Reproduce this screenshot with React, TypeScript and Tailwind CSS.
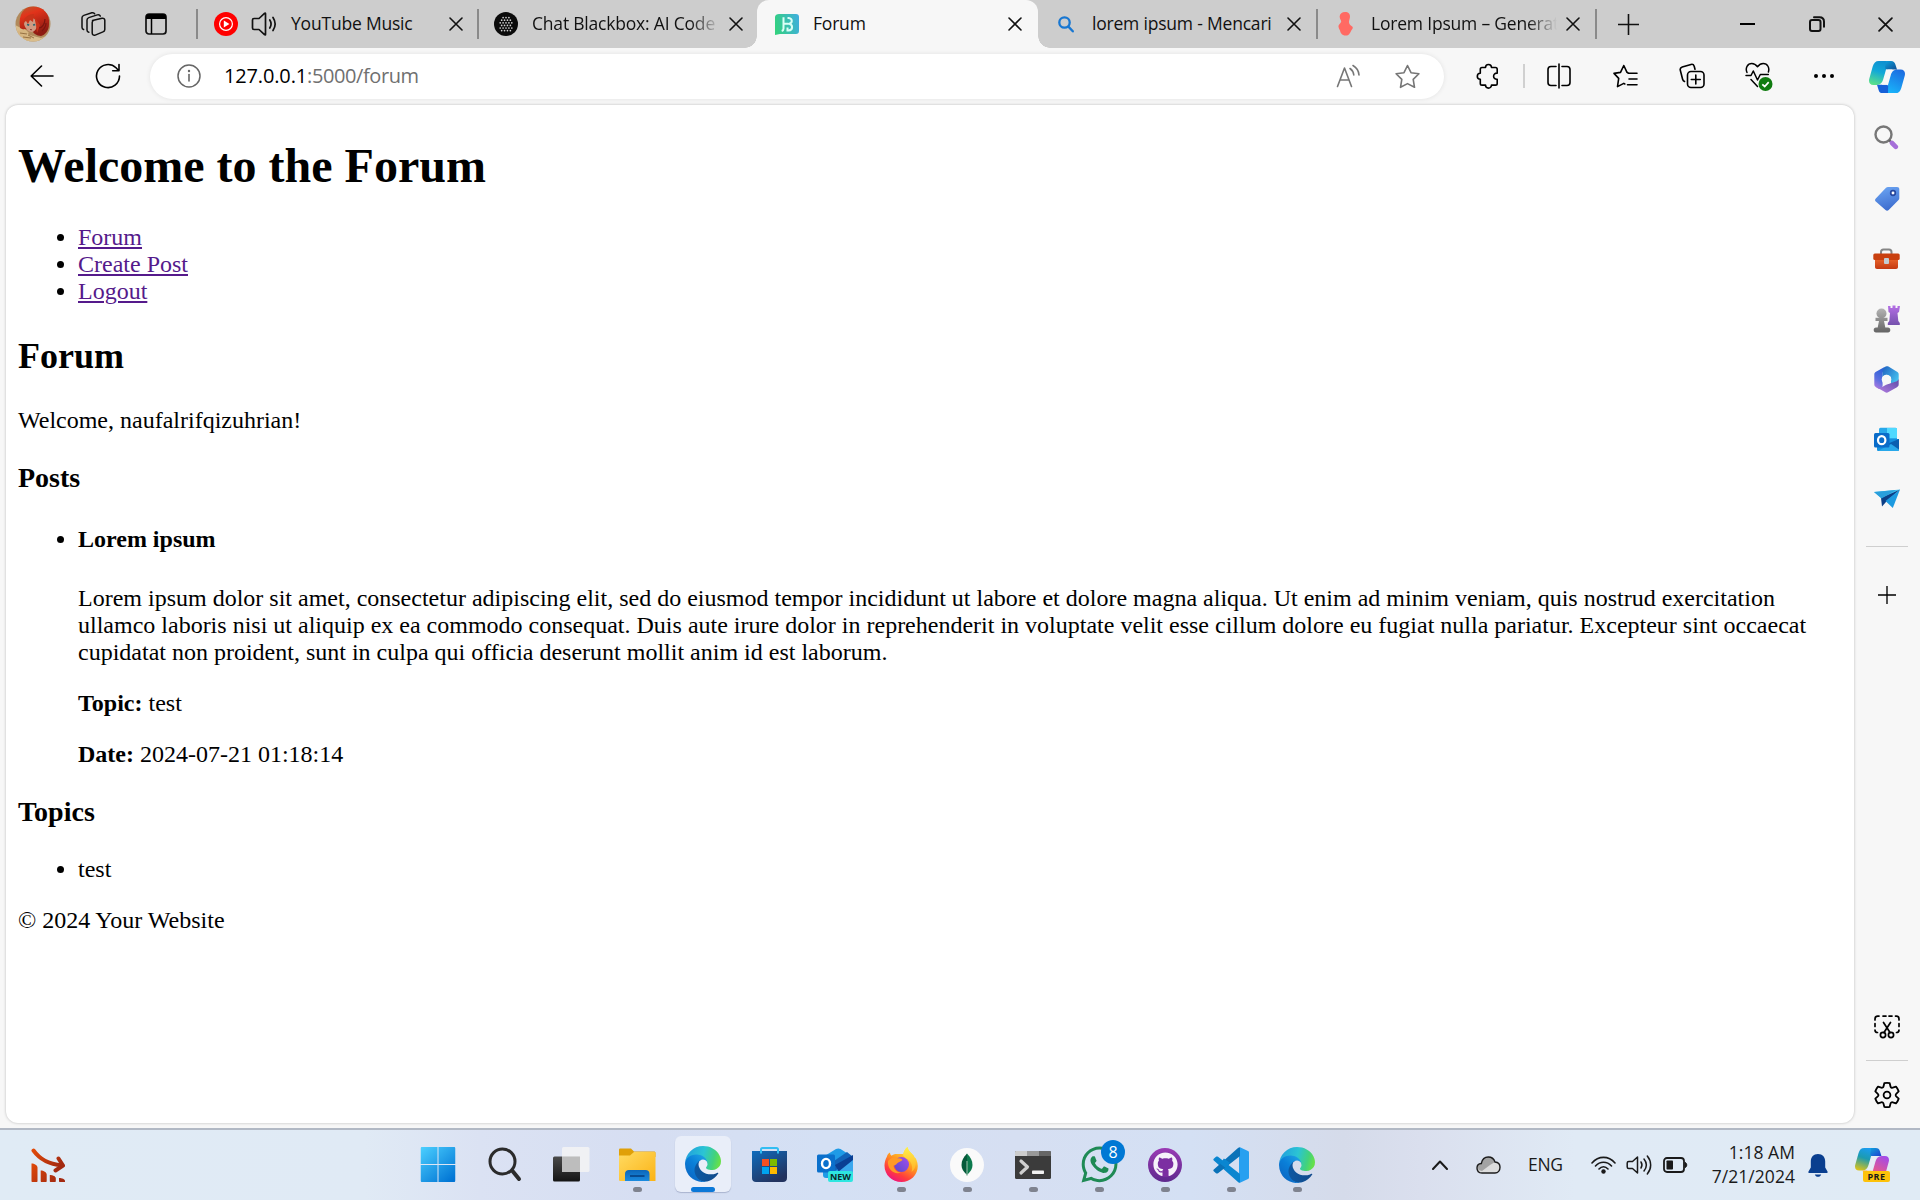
import React from "react";
import { FaGithub, FaWhatsapp } from "react-icons/fa";

type IconProps = { size?: number; className?: string };

const line = {
  fill: "none",
  stroke: "currentColor",
  strokeWidth: 1.6,
  strokeLinecap: "round" as const,
  strokeLinejoin: "round" as const,
};

/* ---------- generic glyphs ---------- */

function Cross({ size = 14 }: IconProps) {
  return (
    <svg width={size} height={size} viewBox="0 0 14 14" className="shrink-0">
      <path d="M1 1l12 12M13 1L1 13" {...line} />
    </svg>
  );
}

function Plus({ size = 20 }: IconProps) {
  return (
    <svg width={size} height={size} viewBox="0 0 20 20">
      <path d="M10 0v20M0 10h20" {...line} strokeLinecap="butt" strokeWidth={1.5} />
    </svg>
  );
}

function Avatar() {
  return (
    <svg width="36" height="36" viewBox="0 0 36 36">
      <defs>
        <clipPath id="av"><circle cx="18" cy="18" r="17.5" /></clipPath>
        <linearGradient id="avh" x1="0" y1="0" x2="0.4" y2="1">
          <stop offset="0" stopColor="#b5602f" />
          <stop offset=".35" stopColor="#e2331a" />
          <stop offset="1" stopColor="#8e1b12" />
        </linearGradient>
      </defs>
      <g clipPath="url(#av)">
        <rect width="36" height="36" fill="#b08a5c" />
        <path d="M0 19l8 4 6 6 12 3 8-3v7H0z" fill="#d9bd8c" />
        <path d="M5 22C3 8 9 0 19 0c10 0 16 8 15 18 0 7-4 11-8 12-4 0-9-3-10-8l-7 2z" fill="url(#avh)" />
        <path d="M10 14c3-3 7-3 11 0l1 5c0 4-3 7-5 7-4 0-7-4-8-8z" fill="#cf9a82" />
        <path d="M8 17c1-6 6-9 11-9l-1 8-3-2-2 4-2-3zM19 10l6 9-3 8-1-8z" fill="#c93319" />
        <path d="M12 18.500l2.200.6M18 19l2.200-.4" stroke="#2f6672" strokeWidth="1.700" />
        <path d="M15 23.500l2 .3" stroke="#8a3a30" strokeWidth="1" />
        <path d="M2 25l8-2 4 4-4 2 7 1-3 6H4z" fill="#d6b580" />
        <path d="M5 27l7 1M8 31l8 1M13 29l6 3" stroke="#8e6a3c" strokeWidth=".9" />
        <path d="M24 22c3 0 6-4 6-9M27 25c2-2 4-5 4-8" stroke="#7a160f" strokeWidth="1.200" fill="none" />
      </g>
    </svg>
  );
}

function Workspaces() {
  return (
    <svg width="26" height="26" viewBox="0 0 26 26" {...line} strokeWidth={1.5}>
      <path d="M12.500 9.500 22 7.300c1.600-.3 2.800.6 2.800 2v9.200c0 1.200-.6 2-1.800 2.400l-7.800 3.200c-1.600.6-3-.3-3-2V11.400c0-1 .6-1.700 1.600-2z" />
      <path d="M8.800 21.300c-1.200-.2-1.800-1-1.800-2.200V9c0-1.300.6-2 1.800-2.400l8.500-2.700c1.500-.4 2.500 0 3 1.200" />
      <path d="M3.600 18.500C2.500 18.200 2 17.300 2 16.200V6.800c0-1.300.6-2 1.800-2.400l8-2.600c1.400-.4 2.400 0 2.900 1" />
    </svg>
  );
}

function TabActions() {
  return (
    <svg width="22" height="22" viewBox="0 0 22 22">
      <rect x="1" y="1" width="20" height="20" rx="3" {...line} strokeWidth={1.7} />
      <path d="M1 4a3 3 0 0 1 3-3h14a3 3 0 0 1 3 3v2H1z" fill="#000" />
      <path d="M6.500 6v15" stroke="#000" strokeWidth="1.500" />
    </svg>
  );
}

function TabSpeaker() {
  return (
    <svg width="26" height="26" viewBox="0 0 26 26" {...line} strokeWidth={1.7}>
      <path d="M14.500 2.500v21c0 .6-.5.6-1 .2L8 18.500H3c-1 0-1.500-.6-1.500-1.500V9c0-.9.500-1.500 1.500-1.500h5l5.500-5.200c.5-.4 1-.4 1 .2z" />
      <path d="M18.800 9c1.600 2.500 1.600 5.500 0 8M22 6.500c2.800 4.200 2.800 8.800 0 13" />
    </svg>
  );
}

function MusicIcon() {
  return (
    <svg width="24" height="24" viewBox="0 0 24 24">
      <circle cx="12" cy="12" r="12" fill="#f00" />
      <circle cx="12" cy="12" r="6.400" fill="none" stroke="#fff" strokeWidth="1.200" />
      <path d="M9.800 8.400v7.200l5.600-3.600z" fill="#fff" />
    </svg>
  );
}

function BlackboxIcon() {
  const rows: [number, number][] = [[5.600, 3], [8.200, 4], [10.800, 5], [13.400, 4], [16, 5], [18.600, 4]];
  return (
    <svg width="24" height="24" viewBox="0 0 24 24">
      <circle cx="12" cy="12" r="12" fill="#0b0b0b" />
      {rows.map(([y, n]) =>
        Array.from({ length: n }, (_, i) => (
          <circle key={`${y}-${i}`} cx={12 + (i - (n - 1) / 2) * 2.900} cy={y} r=".85" fill="#d0d0d0" />
        ))
      )}
    </svg>
  );
}

function ForumIcon() {
  return (
    <svg width="24" height="21" viewBox="0 0 24 21">
      <defs>
        <linearGradient id="fo" x1="0" y1=".6" x2="1" y2=".4">
          <stop offset="0" stopColor="#33d17f" />
          <stop offset="1" stopColor="#3fb0da" />
        </linearGradient>
      </defs>
      <path d="M4 0h17c2 0 3 1 3 3v14c0 2-1 3-3 3H5l-5 1V3c0-2 2-3 4-3z" fill="url(#fo)" />
      <path d="M8.500 3.200v11.500c0 1.500-.8 2-1.800 2.300M9 9.800h4.200M12.500 4h1.200c4 .6 4 4.800.6 5.800 3.800 1 3.800 6.200-.6 6.800h-1.200v-3" fill="none" stroke="#d9fff6" strokeWidth="2" />
    </svg>
  );
}

function BingSearch() {
  return (
    <svg width="16" height="17" viewBox="0 0 16 17" fill="none" stroke="#1877d2" strokeWidth="2.300" strokeLinecap="round">
      <circle cx="6.500" cy="6.500" r="5.200" />
      <path d="M10.400 10.600l4.400 4.700" />
    </svg>
  );
}

function LoremIcon() {
  return (
    <svg width="15" height="24" viewBox="0 0 15 24">
      <path d="M7 0c3.500 0 5 2 5 4.500 0 2-.8 3-1 5s1 3.500 3.200 5c1 .9.600 2.200-.4 3.300-1.500 1.800-1.800 5.800-6 5.800S2.500 20.800 2 18.600C1.600 17 0 15.500 .6 13.600c.5-1.600 2.500-2.300 2.600-4C3.300 8 1.500 6.800 1.700 4.300 1.900 1.600 4 0 7 0z" fill="#ff6a63" />
    </svg>
  );
}

/* ---------- toolbar icons ---------- */

const BackIcon = () => (
  <svg width="24" height="22" viewBox="0 0 24 22"><path d="M11.500 1 1.200 11l10.300 10M1.500 11H23" {...line} /></svg>
);
const RefreshIcon = () => (
  <svg width="26" height="26" viewBox="0 0 26 26">
    <path d="M24.500 13A11.500 11.500 0 1 1 21 4.800l2.800 2.900M24 1.500v6.300h-6.300" {...line} />
  </svg>
);
const InfoIcon = () => (
  <svg width="24" height="24" viewBox="0 0 24 24" className="text-[#666]">
    <circle cx="12" cy="12" r="11" {...line} strokeWidth={1.5} />
    <path d="M12 10.500V17" {...line} />
    <circle cx="12" cy="7" r="1.200" fill="currentColor" />
  </svg>
);
const ReadAloud = () => (
  <svg width="25" height="24" viewBox="0 0 25 24" className="text-[#767676]">
    <path d="M1.500 22.500 8.500 4l7 18.500M4 16h9M14 4.500c2.500 1.700 3.500 3.700 3.800 6.500M17 1.500c4 2.300 5.700 5.500 6 9.500" {...line} />
  </svg>
);
const STAR = "M12.500 1.500 16 8.700l7.900 1.100-5.700 5.600 1.300 7.900-7-3.700-7 3.700 1.300-7.900L1.100 9.800 9 8.700z";
const StarIcon = () => (
  <svg width="25" height="25" viewBox="0 0 25 25" className="text-[#767676]"><path d={STAR} {...line} /></svg>
);
const PuzzleIcon = () => (
  <svg width="24" height="26" viewBox="0 0 24 26">
    <path d="M9.500 4.500a3 3 0 0 1 6 0h4c1 0 1.700.7 1.700 1.700v4c-4.800-.5-4.800 6.500 0 6v4.200c0 1-.7 1.700-1.700 1.700h-4a3 3 0 0 1-6 0H6c-1 0-1.700-.7-1.700-1.700v-4.200a3 3 0 0 1 0-6v-4c0-1 .7-1.700 1.700-1.700z" {...line} />
  </svg>
);
const SplitIcon = () => (
  <svg width="24" height="26" viewBox="0 0 24 26">
    <path d="M9 3.500H4C2 3.500 1 4.500 1 6.500v13c0 2 1 3 3 3h5M15 3.500h5c2 0 3 1 3 3v13c0 2-1 3-3 3h-5M12 1v24" {...line} />
  </svg>
);
const FavoritesIcon = () => (
  <svg width="25" height="25" viewBox="0 0 25 25">
    <path d="M15.500 9.200 14 8.300 10.800 1.500 7.500 8.400l-6.500 1 4.700 5-1.200 8.200 6.300-3.200 1 .6M15.500 9.200h8.500M16 15h8M14.500 20.800H24" {...line} />
  </svg>
);
const CollectionsIcon = () => (
  <svg width="26" height="26" viewBox="0 0 26 26">
    <path d="M5.500 18.500c-1-.4-1.600-1.100-1.900-2.200L1.300 7.200C.9 5.600 1.600 4.500 3.200 4L12 1.400c1.500-.4 2.700.3 3.200 1.800l.8 3" {...line} />
    <rect x="8.500" y="8.500" width="16.500" height="16" rx="3.500" {...line} />
    <path d="M16.800 12v9M12.300 16.500h9" {...line} />
  </svg>
);
const EssentialsIcon = () => (
  <svg width="28" height="30" viewBox="0 0 28 30">
    <path d="M2 10.500C0 6 2.500 1.500 6.800 1.500c3 0 4.500 1.600 5.700 3.200 1.300-1.600 2.800-3.200 5.700-3.200 4.500 0 6.500 4.500 5.200 8.500M1 13.500h5L8.300 9l4.200 9 2.800-5.500h8M6 17.500l6.500 7" {...line} strokeWidth={1.500} />
    <circle cx="20.500" cy="22" r="7" fill="#107c10" />
    <path d="M17.300 22.300l2.400 2.200 4-4.400" fill="none" stroke="#fff" strokeWidth="1.700" />
  </svg>
);

function CopilotIcon({ pre = false, w = 36 }: { pre?: boolean; w?: number }) {
  const a = pre ? "cpa" : "ca";
  const b = pre ? "cpb" : "cb";
  const c = pre ? "cpc" : "cc";
  return (
    <svg width={w} height={w * 0.9} viewBox="0 0 36 32.400">
      <defs>
        <linearGradient id={a} x1=".6" y1="0" x2=".3" y2="1">
          <stop offset="0" stopColor={pre ? "#1a9cf0" : "#0e8fd0"} />
          <stop offset=".45" stopColor={pre ? "#1c9bb0" : "#12a8d8"} />
          <stop offset="1" stopColor={pre ? "#d8c21c" : "#5ae08a"} />
        </linearGradient>
        <linearGradient id={b} x1=".8" y1="0" x2=".3" y2="1">
          <stop offset="0" stopColor={pre ? "#a24bea" : "#1c6be0"} />
          <stop offset="1" stopColor={pre ? "#ff5f6a" : "#19b6fb"} />
        </linearGradient>
        <linearGradient id={c} x1="0" y1="0" x2="1" y2="1">
          <stop offset="0" stopColor="#0fa0dc" />
          <stop offset="1" stopColor={pre ? "#1c3fd0" : "#0f4f96"} />
        </linearGradient>
      </defs>
      <path d="M9.800 0H22c-2 .3-3 1.800-3.700 4l-4 14c-1 3.600-3 5.900-6.500 5.900H4.300C1 23.900-.6 21.500.2 18L3.700 5.500C4.800 2 6.500 0 9.800 0z" fill={`url(#${a})`} />
      <path d="M26.200 32.400H14c2-.3 3-1.800 3.700-4l4-14c1-3.600 3-5.900 6.500-5.900h3.500c3.300 0 4.900 2.400 4.100 5.900l-3.500 12.500c-1.100 3.500-2.800 5.500-6.100 5.500z" fill={`url(#${b})`} />
      <path d="M17 0h5c2.500 0 3.700 1.200 4.400 3.500L28 8.500h-9.500c-2 0-2.500-1-2.300-3z" fill={`url(#${c})`} />
      <path d="M19 32.400h-5c-2.500 0-3.700-1.200-4.400-3.500L8 23.800h8.500c2.500 0 3 1 2.600 3z" fill={pre ? "#ffb03a" : "#1660d8"} />
      <path d="M18.500 8.600h5c-1.200 1.100-2 2.700-2.600 4.700l-3 10.500h-5.200c1.200-1.300 1.900-3.200 2.400-5z" fill={pre ? "#e6edf6" : "#f7f7f7"} />
    </svg>
  );
}

/* ---------- sidebar icons ---------- */

const SideSearch = () => (
  <svg width="25" height="25" viewBox="0 0 25 25">
    <circle cx="9.500" cy="9.500" r="8" fill="none" stroke="#777" strokeWidth="2.400" />
    <path d="M15 15l3 3" stroke="#666" strokeWidth="2.400" />
    <path d="M18 18l3.800 3.800" stroke="#a56fd8" strokeWidth="4.600" strokeLinecap="round" />
  </svg>
);
const TagIcon = () => (
  <svg width="26" height="26" viewBox="0 0 26 26">
    <defs><linearGradient id="tg" x1="0" y1="0" x2=".3" y2="1"><stop stopColor="#6ea8f5" /><stop offset="1" stopColor="#3f6fd0" /></linearGradient></defs>
    <path d="M14 1h9c1.500 0 2.300.8 2.300 2.300V12c0 1-.3 1.600-1 2.300l-9.600 9.800c-1 1-2.200 1-3.200 0L1.800 15.600c-1-1-1-2.200 0-3.200L12 1.800c.6-.6 1.200-.8 2-.8z" fill="url(#tg)" />
    <circle cx="19" cy="7" r="2.300" fill="#fff" stroke="#2547a0" strokeWidth="1.700" />
  </svg>
);
const ToolboxIcon = () => (
  <svg width="27" height="22" viewBox="0 0 27 22">
    <defs><linearGradient id="tb" x1="0" y1="0" x2="0" y2="1"><stop stopColor="#e8632a" /><stop offset="1" stopColor="#c43a12" /></linearGradient></defs>
    <path d="M8 6V4c0-1.700.8-2.500 2.500-2.500h5.500c1.700 0 2.500.8 2.500 2.500v2" fill="none" stroke="#858585" strokeWidth="2" />
    <path d="M2 11h23v8c0 1.300-.8 2-2 2H4c-1.200 0-2-.7-2-2z" fill="url(#tb)" />
    <rect x=".3" y="5.500" width="26.400" height="6.500" rx="1.500" fill="#c9400f" />
    <rect x="11" y="10" width="5" height="6" rx="1" fill="#c4ccd2" />
  </svg>
);
const ChessIcon = () => (
  <svg width="27" height="28" viewBox="0 0 27 28">
    <defs>
      <linearGradient id="ch" x1="0" y1="0" x2="0" y2="1"><stop stopColor="#b56fe6" /><stop offset="1" stopColor="#7552ad" /></linearGradient>
      <linearGradient id="cp" gradientUnits="userSpaceOnUse" x1="0" y1="3" x2="0" y2="28"><stop stopColor="#b5b5b5" /><stop offset="1" stopColor="#636363" /></linearGradient>
    </defs>
    <path d="M15 1h2.500v2h2V.5h3v2.500h2V1H27l-1 6-1.500 1 .8 8 1.500 2v2h-12v-2l1.500-2 .7-8-1.500-1z" fill="url(#ch)" />
    <circle cx="8.500" cy="8.500" r="5" fill="url(#cp)" />
    <path d="M2.500 12.800h12v3.200H11l1.300 6.500H15c1.500 0 2.300 1 2.300 2.500s-.8 2.500-2.300 2.500H3c-1.500 0-2.300-1-2.300-2.500S1.500 22.500 3 22.500h1.700L6 16H2.500z" fill="url(#cp)" />
  </svg>
);
const OfficeIcon = () => (
  <svg width="25" height="27" viewBox="0 0 25 27">
    <defs>
      <linearGradient id="of" x1=".3" y1="0" x2="0" y2="1"><stop stopColor="#2f62d8" /><stop offset=".5" stopColor="#5b6fe0" /><stop offset="1" stopColor="#b97be0" /></linearGradient>
      <linearGradient id="og" x1="0" y1="0" x2="1" y2=".8"><stop stopColor="#1f5fc0" /><stop offset="1" stopColor="#48c8f2" /></linearGradient>
      <linearGradient id="oh" x1="0" y1="1" x2="1" y2="0"><stop stopColor="#b77fe4" /><stop offset="1" stopColor="#5b4aa6" /></linearGradient>
    </defs>
    <path d="M10.500 1 2 5.800C.8 6.500.3 7.300.3 8.500v9.800c0 1.300.5 2.200 1.700 2.900l3 1.700c2.500 0 3.600-1.200 3.600-3.600V7z" fill="url(#of)" />
    <path d="M12.500.2C9.500.9 8.500 3.500 8.500 6.500V11l4-2.300L17 11v8l6-3.500c1-.6 1.700-1.500 1.700-3V8.500c0-1.200-.5-2-1.700-2.700L14.500.6c-.7-.4-1.300-.5-2-.4z" fill="url(#og)" />
    <path d="M24.700 12.500v5.800c0 1.300-.5 2.200-1.700 2.900l-8.500 4.900c-1.200.7-2.400.7-3.600 0L2 21c2.200 1 4.600.9 6.600-.3l4-2.300 9.500-3c1.500-.6 2.400-1.500 2.600-2.900z" fill="url(#oh)" />
    <circle cx="12.500" cy="13.500" r="4.800" fill="#f7f7f7" />
  </svg>
);
const OutlookIcon = () => (
  <svg width="25" height="25" viewBox="0 0 25 25">
    <rect x="5" y=".8" width="18" height="15" rx="1.500" fill="#28a8ea" />
    <path d="M13 1h10v10H13z" fill="#50d9ff" />
    <path d="M3 12h22v10.500c0 1-.7 1.500-1.500 1.500h-19C3.500 24 3 23.500 3 22.500z" fill="#1490df" />
    <path d="M25 12v11L13 17z" fill="#0a5fb0" />
    <path d="M4 24 17 17l8 5.500c0 1-.7 1.500-1.500 1.500z" fill="#28a8ea" />
    <rect x="0" y="6" width="15.500" height="14.500" rx="1.500" fill="#0a6cc9" />
    <ellipse cx="7.700" cy="13.200" rx="3.700" ry="4" fill="none" stroke="#fff" strokeWidth="2.200" />
  </svg>
);
const DropIcon = () => (
  <svg width="26" height="20" viewBox="0 0 26 20">
    <path d="M0 3 26 .5 8 9.500z" fill="#41c3f0" />
    <path d="M26 .5 7 9l1 8.500L12 13z" fill="#0d3f86" />
    <path d="M26 .5 11.500 12l7.300 7z" fill="#1d9ae0" />
    <path d="M0 3l7.500 6.500L22 1z" fill="#2a9fdc" />
  </svg>
);
const SnipIcon = () => (
  <svg width="26" height="24" viewBox="0 0 26 24" {...line} strokeWidth={1.700}>
    <path d="M1 5V4c0-1.700 1-2.900 2.700-2.900H5M9 1.100h3M15 1.100h3M21.500 1.100h1C24 1.100 25 2.300 25 4v1M25 8.500v3M25 15c0 1.500-1 2.500-2.500 2.500M1 8.500v3M1 15c0 1.500 1 2.500 2.500 2.500" />
    <path d="M9.500 7.500l6.500 10M16.500 7.500 10 17.500" />
    <circle cx="9" cy="20" r="2.600" /><circle cx="17" cy="20" r="2.600" />
  </svg>
);
const GearIcon = () => (
  <svg width="28" height="28" viewBox="0 0 28 28" {...line} strokeWidth={1.800}>
    <path d="M11.300 2.200c1.800-.4 3.600-.4 5.400 0l.8 3.300c.2 1 1.200 1.500 2.200 1.200l3.300-1c1.200 1.400 2.100 2.900 2.700 4.700l-2.500 2.400c-.7.700-.7 1.800 0 2.500l2.500 2.300c-.6 1.800-1.500 3.400-2.700 4.700l-3.300-1c-1-.3-2 .300-2.200 1.300l-.8 3.200c-1.800.4-3.600.4-5.400 0l-.8-3.200c-.2-1-1.200-1.600-2.200-1.300l-3.300 1c-1.200-1.400-2.100-3-2.700-4.700l2.500-2.300c.7-.7.7-1.800 0-2.500l-2.500-2.400C2.900 8.600 3.800 7.100 5 5.700l3.300 1c1 .3 2-.3 2.200-1.200z" />
    <circle cx="14" cy="14" r="3.400" />
  </svg>
);

/* ---------- taskbar icons ---------- */

const ChartIcon = () => (
  <svg width="34" height="34" viewBox="0 0 34 34">
    <defs><linearGradient id="ct" x1="0" y1="0" x2="1" y2=".6"><stop stopColor="#e04a0a" /><stop offset="1" stopColor="#a32910" /></linearGradient></defs>
    <path d="M2.500 2.500C9 11.500 17 16 31 17.500M27.500 10.500l4.500 7-7.500 5" fill="none" stroke="url(#ct)" strokeWidth="4" strokeLinecap="round" strokeLinejoin="round" />
    <path d="M.5 15.500c3 0 6 2 6 4V33c0 .7-.3 1-1 1h-4c-.7 0-1-.3-1-1zM9.700 22.500c3 0 6 2 6 4V33c0 .7-.3 1-1 1h-4c-.7 0-1-.3-1-1zM18.800 27c3 0 6 1.300 6 3.300V33c0 .7-.3 1-1 1h-4c-.7 0-1-.3-1-1zM28 30c3 0 6 1 6 3v1h-5c-.7 0-1-.3-1-1z" fill="url(#ct)" />
  </svg>
);
const WindowsIcon = () => (
  <svg width="35" height="35" viewBox="0 0 35 35" className="-translate-x-[1.5px]">
    <defs><linearGradient id="wn" gradientUnits="userSpaceOnUse" x1="0" y1="0" x2="30" y2="35"><stop stopColor="#4cd0ff" /><stop offset="1" stopColor="#0074d4" /></linearGradient></defs>
    <path d="M1.500 0H17v17H0V1.500C0 .6.6 0 1.500 0zM18 0h15.500c.9 0 1.500.6 1.500 1.500V17H18zM0 18h17v17H1.500C.6 35 0 34.400 0 33.500zM18 18h17v15.500c0 .9-.6 1.500-1.500 1.500H18z" fill="url(#wn)" />
  </svg>
);
const TaskSearch = () => (
  <svg width="34" height="35" viewBox="0 0 34 35" fill="none" stroke="#2b2b2b" strokeLinecap="round">
    <circle cx="14.500" cy="14.500" r="12.500" strokeWidth="3" />
    <path d="M24.500 24l6.500 8" strokeWidth="4" />
  </svg>
);
const TaskView = () => (
  <svg width="37" height="35" viewBox="0 0 37 35">
    <defs><linearGradient id="tv" x1="0" y1="0" x2="0" y2="1"><stop stopColor="#4a4a4a" /><stop offset="1" stopColor="#141414" /></linearGradient></defs>
    <rect x="0" y="9.500" width="27" height="25" rx="1.500" fill="url(#tv)" />
    <rect x="9" y="0" width="27.500" height="25" rx="1.500" fill="#f1f1f3" opacity=".95" />
    <path d="M9 9.500h18V25H9z" fill="#bdbdbd" />
  </svg>
);
const FolderIcon = () => (
  <svg width="37" height="34" viewBox="0 0 37 34">
    <defs>
      <linearGradient id="fd" x1="0" y1="0" x2="1" y2="1"><stop stopColor="#ffdb62" /><stop offset="1" stopColor="#fbb316" /></linearGradient>
      <linearGradient id="fb" x1="0" y1="0" x2="0" y2="1"><stop stopColor="#0c66b8" /><stop offset="1" stopColor="#1a8be0" /></linearGradient>
    </defs>
    <path d="M0 2C0 .7.600.500 1.500.500H12l3 3h20c1 0 1.500.5 1.500 1.500V9H0z" fill="#e0a008" />
    <path d="M0 7.500h11L15 4h20c1 0 1.500.5 1.500 1.500V33H1.500C.5 33 0 32.500 0 31.500z" fill="url(#fd)" />
    <path d="M6 33v-7c0-2.700 1.500-4 4-4h16.500c2.500 0 4 1.300 4 4v7z" fill="url(#fb)" />
    <path d="M11 28h14.500" stroke="#07478a" strokeWidth="1.800" />
  </svg>
);
function EdgeIcon({ id }: { id: string }) {
  return (
    <svg width="36" height="36" viewBox="0 0 256 256">
      <defs>
        <linearGradient id={`${id}a`} gradientUnits="userSpaceOnUse" x1="63" y1="178" x2="241" y2="178"><stop stopColor="#0c59a4" /><stop offset="1" stopColor="#114a8b" /></linearGradient>
        <linearGradient id={`${id}b`} gradientUnits="userSpaceOnUse" x1="157" y1="100" x2="46" y2="221"><stop stopColor="#1b9de2" /><stop offset=".5" stopColor="#0a7fd8" /><stop offset="1" stopColor="#0b6cc8" /></linearGradient>
        <linearGradient id={`${id}c`} gradientUnits="userSpaceOnUse" x1="30" y1="60" x2="250" y2="120"><stop stopColor="#23a6dc" /><stop offset=".45" stopColor="#2bc4d4" /><stop offset=".8" stopColor="#42d27c" /><stop offset="1" stopColor="#66e04a" /></linearGradient>
      </defs>
      <g transform="translate(-4.63 -4.92)">
        <path fill={`url(#${id}a)`} d="M235.680 195.460a93.730 93.730 0 0 1-10.540 4.710 101.870 101.870 0 0 1-35.900 6.460c-47.320 0-88.540-32.550-88.540-74.320A31.480 31.480 0 0 1 117.130 105c-42.800 1.800-53.800 46.400-53.800 72.530 0 73.880 68.090 81.370 82.760 81.370 7.910 0 19.840-2.300 27-4.560l1.310-.44a128.340 128.340 0 0 0 66.600-52.800 4 4 0 0 0-5.320-5.640z" />
        <path fill={`url(#${id}b)`} d="M110.340 246.340A79.200 79.200 0 0 1 87.600 225a80.720 80.720 0 0 1 29.530-120c3.120-1.470 8.450-4.130 15.540-4a32.350 32.350 0 0 1 25.690 13 31.880 31.880 0 0 1 6.360 18.660c0-.21 24.460-79.600-80-79.600-43.900 0-80 41.660-80 78.210a130.150 130.150 0 0 0 12.110 56 128 128 0 0 0 156.380 67.110 75.550 75.550 0 0 1-62.780-8z" />
        <path fill={`url(#${id}c)`} d="M156.940 153.780c-.81 1.050-3.300 2.500-3.300 5.660 0 2.610 1.700 5.120 4.720 7.230 14.380 10 41.490 8.680 41.560 8.680a59.560 59.560 0 0 0 30.270-8.350 61.380 61.380 0 0 0 30.430-52.880c.26-22.410-8-37.310-11.340-43.910C228.090 28.760 182.350 4.920 132.610 4.920a128 128 0 0 0-128 126.200c.48-36.540 36.800-66.050 80-66.050 3.500 0 23.460.34 42 10.070 16.340 8.580 24.900 18.940 30.850 29.210 6.180 10.670 7.280 24.150 7.280 29.520s-2.740 13.330-7.800 19.910z" />
      </g>
    </svg>
  );
}
const StoreIcon = () => (
  <svg width="35" height="35" viewBox="0 0 35 35">
    <defs><linearGradient id="st" x1="0" y1="0" x2=".6" y2="1"><stop stopColor="#0f6cbd" /><stop offset="1" stopColor="#23335f" /></linearGradient></defs>
    <path d="M0 4h35v27c0 2.500-1.500 4-4 4H4c-2.500 0-4-1.500-4-4z" fill="url(#st)" />
    <path d="M9 6.500V2.500C9 1.500 9.500 1 10.500 1h14c1 0 1.500.5 1.500 1.500v4" fill="none" stroke="#32bdf2" strokeWidth="2" />
    <path d="M10 12h7v7h-7z" fill="#f25022" /><path d="M18 12h7v7h-7z" fill="#7fba00" />
    <path d="M10 20h7v7h-7z" fill="#00a4ef" /><path d="M18 20h7v7h-7z" fill="#ffb900" />
  </svg>
);
const OutlookNew = () => (
  <div className="relative h-[34px] w-[36px]">
    <svg width="36" height="34" viewBox="0 0 36 34">
      <path d="M6 9 19 1c1.500-.8 3-.8 4.500 0L36 9v18c0 2-1 3-3 3H9c-2 0-3-1-3-3z" fill="#1f9be6" />
      <path d="M17 13 30 4l6 5-18 14z" fill="#1263b8" />
      <path d="M18 17 36 7v8L22 24z" fill="#0a3f94" />
      <path d="M36 12v16H16z" fill="#3aa7ee" />
      <rect x="0" y="6.500" width="18" height="18" rx="1.500" fill="#0a70cc" />
      <ellipse cx="9" cy="15.500" rx="4" ry="4.600" fill="none" stroke="#fff" strokeWidth="2.400" />
    </svg>
    <span className="absolute top-[23px] left-[11px] flex h-[11px] w-[25px] items-center justify-center rounded-[2px] bg-[#2ee6e0] font-['Open_Sans'] text-[9px] leading-none font-bold text-[#0c2b2b]">NEW</span>
  </div>
);
const FirefoxIcon = () => (
  <svg width="35" height="35" viewBox="0 0 35 35">
    <defs>
      <linearGradient id="ff" x1=".8" y1=".1" x2=".3" y2="1"><stop stopColor="#fff04a" /><stop offset=".4" stopColor="#ff9a1f" /><stop offset=".75" stopColor="#ff3d3d" /><stop offset="1" stopColor="#ee1280" /></linearGradient>
      <linearGradient id="fp" x1="1" y1="0" x2="0" y2="1"><stop stopColor="#a14ef0" /><stop offset="1" stopColor="#5a48c8" /></linearGradient>
      <linearGradient id="fy" x1="0" y1="0" x2="0" y2="1"><stop stopColor="#fff04a" /><stop offset="1" stopColor="#ffb02a" /></linearGradient>
    </defs>
    <path d="M3 9.500C3.300 7.800 4.300 6.500 6 5.500c0 1.500.5 2.500 1.500 3.200C9 7.500 10.500 7 12.500 7l7 0C20 4 21.500 1.500 23.500 0c.5 3.500 3 5 5 7.500 0 0 1.500.5 2 3 1 0 1.500 1 2 2.500.8 2 1.300 4 1.300 6C33.800 28 26.500 35 17.500 35 8 35 .5 28 .5 18.500c0-3 1-6.500 2.500-9z" fill="url(#ff)" />
    <circle cx="17.500" cy="17.500" r="7.500" fill="url(#fp)" />
    <path d="M19 8c.5-3.500 2-6 4.500-8 .5 3.500 3 5 5 7.500 5 6 4 14-1 17.500 1-3 1-7-1-10-2-3.500-6-3.500-7.500-7z" fill="url(#fy)" />
    <path d="M4 14c3-3 7-5 10-2.500 2-.5 4 .5 4.500 1.500-1.500 2-4 1.500-5.500 3.500-1 1.500-2.500 2-3.500 2 0 3.500 3.500 7 7.500 7-6 3-14-3-13-11.500z" fill="#ff9a26" />
  </svg>
);
const MongoIcon = () => (
  <svg width="34" height="34" viewBox="0 0 34 34">
    <circle cx="17" cy="17" r="17" fill="#fafafa" />
    <path d="M17 5.500c3.500 4 5.500 7 5.500 11.500 0 4-2 6.500-5.500 10z" fill="#0c7a4d" />
    <path d="M17 5.500c-3.500 4-5.500 7-5.500 11.500 0 4 2 6.500 5.500 10z" fill="#055a3a" />
    <path d="M17 13v15" stroke="#9fc4ae" strokeWidth="1" />
  </svg>
);
const TerminalIcon = () => (
  <svg width="36" height="28" viewBox="0 0 36 28">
    <rect width="36" height="28" rx="1.500" fill="#3b3b3b" />
    <path d="M0 1.500C0 .5.500 0 1.500 0H12v5H0z" fill="#ccc" /><path d="M12 0h12v5H12z" fill="#999" /><path d="M24 0h10.500c1 0 1.500.5 1.500 1.500V5H24z" fill="#666" />
    <path d="M6 10l6.500 6L6 22" fill="none" stroke="#cfcfcf" strokeWidth="3.200" strokeLinecap="round" strokeLinejoin="round" />
    <rect x="17" y="19.500" width="12" height="3.600" rx=".8" fill="#f2f2f2" />
  </svg>
);
const WhatsAppIcon = () => (
  <div className="relative h-[36px] w-[36px]">
    <FaWhatsapp className="h-[41px] w-[41px] -translate-x-[2px] -translate-y-[3px] text-[#1f8a55]" />
    <span className="absolute -top-[7px] left-[20px] flex h-[24px] w-[24px] items-center justify-center rounded-full bg-[#0078d4] font-['Open_Sans'] text-[16px] leading-none text-white">8</span>
  </div>
);
const GithubIcon = () => (
  <div className="flex h-[34px] w-[34px] items-center justify-center rounded-full bg-gradient-to-b from-[#9a3ab4] to-[#5f2a8e]">
    <div className="flex h-[25px] w-[25px] items-center justify-center rounded-full bg-[#7c2fa2]">
      <FaGithub className="h-[25px] w-[25px] text-[#f6f2fa]" />
    </div>
  </div>
);
const VSCodeIcon = () => (
  <svg width="36" height="36" viewBox="0 0 36 36">
    <path d="M27 .3 35 4c.7.300 1 .8 1 1.500v25c0 .7-.3 1.200-1 1.500l-8 3.700-1-8.700V9z" fill="#27a0f0" />
    <path d="M1 11.500 3 9.800c.6-.5 1.300-.5 2 0L27 27v8.700c-.8 0-1.400-.2-2-.8L.8 13.500c-.7-.7-.6-1.400.2-2z" fill="#0a86d0" />
    <path d="M1 24.500 3 26.200c.6.500 1.300.5 2 0L27 9V.3c-.8 0-1.400.2-2 .8L.8 22.500c-.7.700-.6 1.400.2 2z" fill="#0a72b8" />
    <path d="M9 14.200l6 4.300" stroke="#0a86d0" strokeWidth="6.500" />
  </svg>
);

/* ---------- tray icons ---------- */

const CloudIcon = () => (
  <svg width="25" height="18" viewBox="0 0 25 18">
    <path d="M6 16.500c-3 0-5-1.700-5-4.500 0-2.500 1.800-4.300 4.300-4.500C6 4 8.500 1 12.300 1c3.500 0 5.700 2 6.700 5 3 .2 5 2.200 5 5.200 0 3.300-2 5.300-5 5.300z" fill="#dcdcdc" />
    <path d="M1.500 10C2 8.500 3.500 7.500 5.300 7.500 6 4 8.500 1 12.300 1c3.500 0 5.700 2 6.700 5l-5 3-8 6-3.500-1z" fill="#a3a3a3" />
    <path d="M6 17c-3 0-5-2-5-5 0-2.500 1.800-4.300 4.300-4.500C6 4 8.500 1 12.300 1c3.500 0 5.700 2 6.700 5 3 .2 5 2.200 5 5.200 0 3.300-2 5.800-5 5.800z" fill="none" stroke="#1c1c1c" strokeWidth="1.400" />
  </svg>
);
const WifiIcon = () => (
  <svg width="25" height="18" viewBox="0 0 25 18">
    <path d="M1 7c6.500-7.500 16.500-7.500 23 0M4.500 10c4.500-5 11.500-5 16 0M8 13c2.700-3 6.300-3 9 0" {...line} />
    <circle cx="12.500" cy="15.500" r="2.200" fill="currentColor" />
  </svg>
);
const VolumeIcon = () => (
  <svg width="26" height="22" viewBox="0 0 26 22" {...line} strokeWidth={1.500}>
    <path d="M11.500 3v16L6.500 14.500H2.800c-1 0-1.600-.6-1.600-1.500V9c0-.9.600-1.500 1.600-1.500h3.700z" />
    <path d="M15 8c1.300 2 1.300 4 0 6M18 5c3 3.800 3 8.200 0 12M21.300 2c4.500 5.500 4.500 12.500 0 18" />
  </svg>
);
const BatteryIcon = () => (
  <svg width="25" height="16" viewBox="0 0 25 16">
    <rect x="1" y="1" width="20" height="14" rx="3" {...line} strokeWidth={1.800} />
    <rect x="3.500" y="3.500" width="6.500" height="9" rx=".8" fill="currentColor" />
    <path d="M22 5.500c2.300.4 2.300 4.600 0 5z" fill="currentColor" stroke="currentColor" />
  </svg>
);
const BellIcon = () => (
  <svg width="20" height="23" viewBox="0 0 20 23">
    <path d="M10 0c4.500 0 7.200 3 7.200 7.500v6l2.300 4c.4.800 0 1.500-.8 1.500H1.300c-.8 0-1.200-.7-.8-1.500l2.300-4v-6C2.800 3 5.500 0 10 0zM6.800 20.500h6.400c-.6 1.500-1.700 2.300-3.200 2.300s-2.600-.8-3.200-2.300z" fill="#0a3f8f" />
  </svg>
);

/* ---------- regions ---------- */

const Divider = () => <div className="h-[30px] w-[2px] shrink-0 bg-[#8a8a8a]" />;

function TabBar() {
  return (
    <div className="flex h-[48px] items-center bg-[#cdcdcd] text-[17.5px] tracking-[-0.2px] text-[#111]">
      <div className="flex w-[66px] justify-center"><Avatar /></div>
      <div className="flex w-[54px] justify-center"><Workspaces /></div>
      <div className="flex w-[76px] justify-start pl-[25px]"><TabActions /></div>
      <Divider />
      <div className="flex w-[279px] items-center pl-[16px]">
        <MusicIcon />
        <div className="ml-[13px]"><TabSpeaker /></div>
        <span className="ml-[14px] w-[158px] pb-px whitespace-nowrap">YouTube Music</span>
        <Cross />
      </div>
      <Divider />
      <div className="flex w-[278px] items-center pl-[15px]">
        <BlackboxIcon />
        <span className="mr-[9px] ml-[14px] w-[188px] pb-px whitespace-nowrap [mask-image:linear-gradient(to_right,black_84%,transparent)]">Chat Blackbox: AI Code</span>
        <Cross />
      </div>
      <div className="relative flex h-[48px] w-[281px] items-center rounded-t-[12px] bg-[#f7f7f7] pl-[18px]">
        <div className="absolute bottom-0 -left-[12px] h-[12px] w-[12px] bg-[radial-gradient(circle_at_0_0,transparent_11.5px,#f7f7f7_12px)]" />
        <div className="absolute -right-[12px] bottom-0 h-[12px] w-[12px] bg-[radial-gradient(circle_at_100%_0,transparent_11.5px,#f7f7f7_12px)]" />
        <ForumIcon />
        <span className="ml-[14px] w-[195px] pb-px">Forum</span>
        <Cross />
      </div>
      <div className="flex w-[278px] items-center pl-[20px]">
        <BingSearch />
        <span className="ml-[18px] w-[195px] pb-px whitespace-nowrap">lorem ipsum - Mencari</span>
        <Cross />
      </div>
      <Divider />
      <div className="flex w-[277px] items-center pl-[20px]">
        <LoremIcon />
        <span className="mr-[9px] ml-[18px] w-[186px] pb-px whitespace-nowrap [mask-image:linear-gradient(to_right,black_84%,transparent)]">Lorem Ipsum – Generat</span>
        <Cross />
      </div>
      <Divider />
      <div className="ml-[21px]"><Plus size={21} /></div>
      <div className="ml-auto flex">
        <div className="flex w-[69px] items-center justify-center"><div className="h-[2px] w-[15px] bg-black" /></div>
        <div className="flex w-[69px] items-center justify-center">
          <svg width="16" height="16" viewBox="0 0 16 16" {...line} strokeWidth={2}>
            <rect x="1" y="4" width="10.500" height="11" rx="2" /><path d="M5 1.200h5.500c2.800 0 4.500 1.700 4.500 4.500v5" />
          </svg>
        </div>
        <div className="flex w-[69px] items-center justify-center"><Cross size={15} /></div>
      </div>
    </div>
  );
}

function Toolbar() {
  return (
    <div className="flex h-[57px] items-center bg-[#f7f7f7] pb-[1px]">
      <div className="flex w-[83px] justify-center"><BackIcon /></div>
      <div className="flex w-[67px] pl-[12px]"><RefreshIcon /></div>
      <div className="flex h-[45px] w-[1294px] items-center rounded-full bg-white shadow-[0_0_5px_rgba(0,0,0,0.09)]">
        <div className="ml-[27px]"><InfoIcon /></div>
        <span className="ml-[23px] text-[20px] tracking-[-0.15px] text-[#707070]"><span className="text-black">127.0.0.1</span><span className="tracking-[-0.4px]">:5000/forum</span></span>
        <div className="mr-[24px] ml-auto flex items-center gap-[34px]"><ReadAloud /><StarIcon /></div>
      </div>
      <div className="flex w-[79px] items-center justify-end"><div className="mr-[23px]"><PuzzleIcon /></div></div>
      <div className="h-[24px] w-[2px] bg-[#d0d0d0]" />
      <div className="flex w-[67px] justify-center"><SplitIcon /></div>
      <div className="flex w-[66px] justify-center"><FavoritesIcon /></div>
      <div className="flex w-[67px] justify-center"><CollectionsIcon /></div>
      <div className="flex w-[68px] justify-center pt-[2px]"><EssentialsIcon /></div>
      <div className="flex w-[61px] items-center justify-center gap-[4px]">
        <i className="h-[4px] w-[4px] rounded-full bg-black" /><i className="h-[4px] w-[4px] rounded-full bg-black" /><i className="h-[4px] w-[4px] rounded-full bg-black" />
      </div>
      <div className="flex flex-1 justify-center pt-[2px]"><CopilotIcon /></div>
    </div>
  );
}

function ForumPage() {
  return (
    <main className="h-[1018px] w-[1848px] overflow-hidden rounded-[12px] bg-white px-[12px] font-['Liberation_Serif',serif] text-[24px] leading-[27px] text-black shadow-[0_0_3px_rgba(0,0,0,0.25)]">
      <h1 className="mt-[33px] text-[48px] leading-[55px] font-bold">Welcome to the Forum</h1>
      <ul className="mt-[31px] list-disc pl-[60px]">
        {["Forum", "Create Post", "Logout"].map((t) => (
          <li key={t}><a href="#" className="text-[#551a8b] underline decoration-2 underline-offset-[2px]">{t}</a></li>
        ))}
      </ul>
      <h2 className="mt-[31px] mb-[30px] text-[36px] leading-[41px] font-bold">Forum</h2>
      <p>Welcome, naufalrifqizuhrian!</p>
      <h3 className="mt-[28px] text-[28px] leading-[32px] font-bold">Posts</h3>
      <ul className="mt-[32px] list-disc pl-[60px]">
        <li>
          <h4 className="font-bold">Lorem ipsum</h4>
          <p className="mt-[32px]">
            Lorem ipsum dolor sit amet, consectetur adipiscing elit, sed do eiusmod tempor incididunt ut labore et dolore magna aliqua. Ut enim ad minim veniam, quis nostrud exercitation ullamco laboris nisi ut aliquip ex ea commodo consequat. Duis aute irure dolor in reprehenderit in voluptate velit esse cillum dolore eu fugiat nulla pariatur. Excepteur sint occaecat cupidatat non proident, sunt in culpa qui officia deserunt mollit anim id est laborum.
          </p>
          <p className="mt-6"><b>Topic:</b> test</p>
          <p className="mt-6"><b>Date:</b> 2024-07-21 01:18:14</p>
        </li>
      </ul>
      <h3 className="my-[28px] text-[28px] leading-[32px] font-bold">Topics</h3>
      <ul className="list-disc pl-[60px]"><li>test</li></ul>
      <p className="mt-6">© 2024 Your Website</p>
    </main>
  );
}

function Sidebar() {
  const apps = [TagIcon, ToolboxIcon, ChessIcon, OfficeIcon, OutlookIcon, DropIcon];
  return (
    <aside className="flex w-[66px] flex-col items-center pt-[2px] pr-px">
      <div className="mb-[2px] flex h-[60px] items-center justify-center"><SideSearch /></div>
      {apps.map((Icon, i) => (
        <div key={i} className="flex h-[60px] items-center justify-center"><Icon /></div>
      ))}
      <div className="mt-[17px] h-px w-[42px] bg-[#cfcfcf]" />
      <div className="mt-[39px]"><Plus size={18} /></div>
      <div className="mt-auto"><SnipIcon /></div>
      <div className="mt-[21px] h-px w-[42px] bg-[#cfcfcf]" />
      <div className="mt-[20px] mb-[19px]"><GearIcon /></div>
    </aside>
  );
}

type TaskItem = { icon: React.ReactNode; state?: "running" | "active" };

function Taskbar() {
  const items: TaskItem[] = [
    { icon: <WindowsIcon /> },
    { icon: <TaskSearch /> },
    { icon: <TaskView /> },
    { icon: <FolderIcon />, state: "running" },
    { icon: <EdgeIcon id="e1" />, state: "active" },
    { icon: <StoreIcon /> },
    { icon: <OutlookNew /> },
    { icon: <FirefoxIcon />, state: "running" },
    { icon: <MongoIcon />, state: "running" },
    { icon: <TerminalIcon />, state: "running" },
    { icon: <WhatsAppIcon />, state: "running" },
    { icon: <GithubIcon />, state: "running" },
    { icon: <VSCodeIcon />, state: "running" },
    { icon: <EdgeIcon id="e2" />, state: "running" },
  ];
  return (
    <footer className="flex h-[72px] border-t-2 border-[#b1b8c4] bg-[linear-gradient(90deg,#e0ebf5_0%,#e0eaf5_19%,#dbe2f3_25%,#d6def2_34%,#d4e0f4_43%,#d6dff2_53%,#d4e0f4_62%,#d5dbea_70%,#dadfee_74%,#e0eaf5_82%,#e0ebf5_100%)] text-[#1a1a1a]">
      <div className="flex w-[406px] items-start pt-[18px] pl-[31px]"><ChartIcon /></div>
      <div className="flex">
        {items.map((it, i) => (
          <div key={i} className="flex w-[66px] flex-col items-center pt-[6px]">
            <div className={it.state === "active" ? "relative flex h-[56px] w-[56px] justify-center rounded-[6px] bg-[#e9eef9] pt-[10px] shadow-[0_1px_1px_rgba(90,100,140,0.35)]" : "relative flex h-[57px] w-[56px] items-center justify-center"}>
              {it.icon}
              {it.state === "active" && <div className="absolute bottom-0 left-[16px] h-[5px] w-[24px] rounded-full bg-[#0b78d8]" />}
              {it.state === "running" && <div className="absolute bottom-px left-[23.500px] h-[5px] w-[9px] rounded-full bg-[#7f838f]" />}
            </div>
          </div>
        ))}
      </div>
      <div className="ml-auto flex h-[70px] items-center">
        <svg width="16" height="10" viewBox="0 0 16 10" className="mr-[28px]"><path d="M1 9l7-7.500L15 9" {...line} strokeWidth={2} /></svg>
        <CloudIcon />
        <span className="ml-[27px] w-[63px] pb-px text-[17.500px] tracking-[-0.3px]">ENG</span>
        <WifiIcon />
        <div className="ml-[10px]"><VolumeIcon /></div>
        <div className="ml-[11px]"><BatteryIcon /></div>
        <div className="w-[107px] pb-[3px] text-right text-[17.500px] leading-[24px] tracking-[0.05px] whitespace-nowrap">
          <div>1:18 AM</div>
          <div>7/21/2024</div>
        </div>
        <div className="ml-[13px]"><BellIcon /></div>
        <div className="relative mr-[30px] ml-[27px] h-[34px] w-[35px]">
          <CopilotIcon pre w={34} />
          <span className="absolute top-[23px] left-[8px] flex h-[11px] w-[27px] items-center justify-center rounded-[2px] bg-[#fdc20a] text-[9px] leading-none font-bold tracking-[0.5px]">PRE</span>
        </div>
      </div>
    </footer>
  );
}

export default function App() {
  return (
    <div className="flex h-[1200px] w-[1920px] flex-col overflow-hidden bg-[#f7f7f7] font-['Open_Sans',sans-serif] text-black">
      <TabBar />
      <Toolbar />
      <div className="flex h-[1023px] pl-[6px]">
        <ForumPage />
        <Sidebar />
      </div>
      <Taskbar />
    </div>
  );
}
